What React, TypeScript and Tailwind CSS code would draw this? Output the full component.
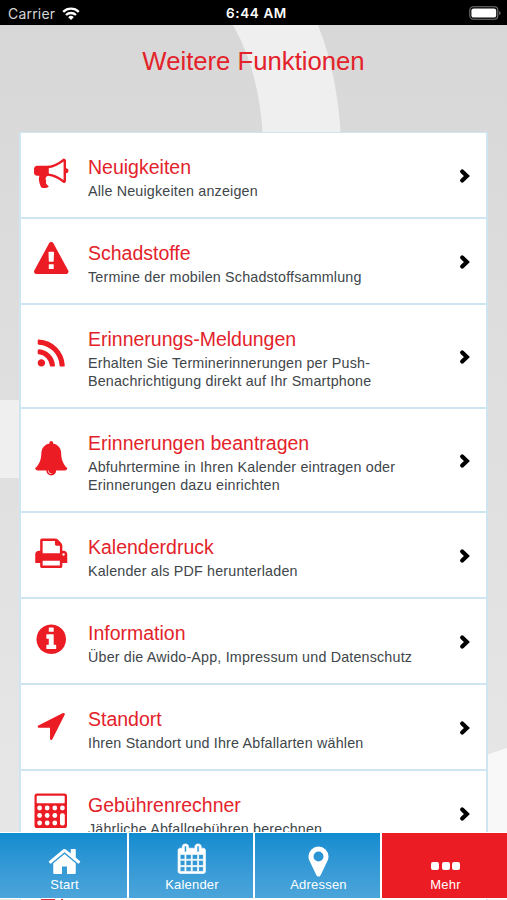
import type { ReactNode } from 'react';
import clsx from 'clsx';

const PATHS = {
  bullhorn:
    'M1664 640q53 0 90.5 37.5t37.5 90.5-37.5 90.5-90.5 37.5v384q0 52-38 90t-90 38q-417-347-812-380-58 19-91 66t-31 100.5 40 92.5q-20 33-23 65.5t6 58 33.5 55 48 50 61.5 50.5q-29 58-111.5 83t-168.5 11.5-132-55.5q-7-23-29.5-87.5t-32-94.5-23-89-15-101 3.5-98 22-110.5h-122q-66 0-113-47t-47-113v-192q0-66 47-113t113-47h480q435 0 896-384 52 0 90 38t38 90v384zm-128 604v-954q-394 302-768 343v270q377 42 768 341z',
  warning:
    'M1024 1375v-190q0-14-9.5-23.5t-22.5-9.5h-192q-13 0-22.5 9.5t-9.5 23.5v190q0 14 9.5 23.5t22.5 9.5h192q13 0 22.5-9.5t9.5-23.5zm-2-374l18-459q0-12-10-19-13-11-24-11h-220q-11 0-24 11-10 7-10 21l17 457q0 10 10 16.5t24 6.5h185q14 0 23.5-6.5t10.5-16.5zm-14-934l768 1408q35 63-2 126-17 29-46.5 46t-63.5 17h-1536q-34 0-63.5-17t-46.5-46q-37-63-2-126l768-1408q17-31 47-49t65-18 65 18 47 49z',
  rss: 'M576 1344q0 80-56 136t-136 56-136-56-56-136 56-136 136-56 136 56 56 136zm512 123q2 28-17 48-18 21-47 21h-135q-25 0-43-16.5t-20-41.5q-22-229-184.5-391.5t-391.5-184.5q-25-2-41.5-20t-16.5-43v-135q0-29 21-47 17-17 43-17h5q160 13 306 80.5t259 181.5q114 113 181.5 259t80.5 306zm512 2q2 27-18 47-18 20-46 20h-143q-26 0-44.5-17.5t-19.5-42.5q-12-215-101-408.5t-231.5-336-336-231.5-408.5-102q-25-1-42.5-19.5t-17.5-43.5v-143q0-28 20-46 18-18 44-18h3q262 13 501.5 120t425.5 294q187 186 294 425.5t120 501.5z',
  bell: 'M912 1696q0-16-16-16-59 0-101.5-42.5t-42.5-101.5q0-16-16-16t-16 16q0 73 51.5 124.5t124.5 51.5q16 0 16-16zm816-288q0 52-38 90t-90 38h-448q0 106-75 181t-181 75-181-75-75-181h-448q-52 0-90-38t-38-90q50-42 91-88t85-119.5 74.5-158.5 50-206 19.5-260q0-152 117-282.5t307-158.5q-8-19-8-39 0-40 28-68t68-28 68 28 28 68q0 20-8 39 190 28 307 158.5t117 282.5q0 139 19.5 260t50 206 74.5 158.5 85 119.5 91 88z',
  print:
    'M448 1536h896v-256h-896v256zm0-640h896v-384h-160q-40 0-68-28t-28-68v-160h-640v640zm1152 64q0-26-19-45t-45-19-45 19-19 45 19 45 45 19 45-19 19-45zm128 0v416q0 13-9.5 22.5t-22.5 9.5h-224v160q0 40-28 68t-68 28h-960q-40 0-68-28t-28-68v-160h-224q-13 0-22.5-9.5t-9.5-22.5v-416q0-79 56.5-135.5t135.5-56.5h64v-544q0-40 28-68t68-28h672q40 0 88 20t76 48l152 152q28 28 48 76t20 88v256h64q79 0 135.5 56.5t56.5 135.5z',
  info: 'M1152 1376v-160q0-14-9-23t-23-9h-96v-512q0-14-9-23t-23-9h-320q-14 0-23 9t-9 23v160q0 14 9 23t23 9h96v320h-96q-14 0-23 9t-9 23v160q0 14 9 23t23 9h448q14 0 23-9t9-23zm-128-896v-160q0-14-9-23t-23-9h-192q-14 0-23 9t-9 23v160q0 14 9 23t23 9h192q14 0 23-9t9-23zm640 416q0 209-103 385.5t-279.5 279.5-385.5 103-385.5-103-279.5-279.5-103-385.5 103-385.5 279.5-279.5 385.5-103 385.5 103 279.5 279.5 103 385.5z',
  arrow:
    'M1593 349l-640 1280q-17 35-57 35-5 0-15-2-22-5-35.5-22.5t-13.5-39.5v-576h-576q-22 0-39.5-13.5t-22.5-35.5 4-42 29-30l1280-640q13-7 29-7 27 0 45 19 15 14 18.5 34.5t-6.5 39.5z',
  home: 'M1472 992v480q0 26-19 45t-45 19h-384v-384h-256v384h-384q-26 0-45-19t-19-45v-480q0-1 .5-3t.5-3l575-474 575 474q1 2 1 6zm223-69l-62 74q-8 9-21 11h-3q-13 0-21-7l-692-577-692 577q-12 8-24 7-13-2-21-11l-62-74q-8-10-7-23.5t11-21.5l719-599q32-26 76-26t76 26l244 204v-195q0-14 9-23t23-9h192q14 0 23 9t9 23v408l219 182q10 8 11 21.5t-7 23.5z',
  calendar:
    'M192 1664h288v-288h-288v288zm352 0h320v-288h-320v288zm-352-352h288v-320h-288v320zm352 0h320v-320h-320v320zm-352-384h288v-288h-288v288zm736 736h320v-288h-320v288zm-384-736h320v-288h-320v288zm768 736h288v-288h-288v288zm-384-352h320v-320h-320v320zm-352-864v-288q0-13-9.5-22.5t-22.5-9.5h-64q-13 0-22.5 9.5t-9.5 22.5v288q0 13 9.5 22.5t22.5 9.5h64q13 0 22.5-9.5t9.5-22.5zm736 864h288v-320h-288v320zm-384-384h320v-288h-320v288zm384 0h288v-288h-288v288zm32-480v-288q0-13-9.5-22.5t-22.5-9.5h-64q-13 0-22.5 9.5t-9.5 22.5v288q0 13 9.5 22.5t22.5 9.5h64q13 0 22.5-9.5t9.5-22.5zm384-64v1280q0 52-38 90t-90 38h-1408q-52 0-90-38t-38-90v-1280q0-52 38-90t90-38h128v-96q0-66 47-113t113-47h64q66 0 113 47t47 113v96h384v-96q0-66 47-113t113-47h64q66 0 113 47t47 113v96h128q52 0 90 38t38 90z',
  marker:
    'M1152 640q0-106-75-181t-181-75-181 75-75 181 75 181 181 75 181-75 75-181zm256 0q0 109-33 179l-364 774q-16 33-47.5 52t-67.5 19-67.5-19-46.5-52l-365-774q-33-70-33-179 0-212 150-362t362-150 362 150 150 362z',
};

function Icon({ path, className }: { path: string; className?: string }) {
  return (
    <svg viewBox="0 0 1792 1792" fill="currentColor" className={clsx('shrink-0 overflow-visible', className)}>
      <path d={path} />
    </svg>
  );
}

function CalculatorIcon() {
  const columns = [5.6, 13.2, 20.8];
  const rows = [15, 22.5, 30];

  return (
    <svg viewBox="0 0 34 36" className="h-9 w-[34px] shrink-0">
      <rect x="0.5" y="0.5" width="32.5" height="34.5" rx="2.6" fill="currentColor" />
      <rect x="2.7" y="2.8" width="28" height="7.4" rx="0.8" fill="white" />
      {rows.map((y) => columns.map((x) => <circle key={`${x}-${y}`} cx={x} cy={y} r="2.4" fill="white" />))}
      <circle cx="28.4" cy="15" r="2.4" fill="white" />
      <rect x="26" y="20.2" width="4.8" height="12.2" rx="2" fill="white" />
    </svg>
  );
}

function Chevron() {
  return (
    <svg viewBox="0 0 12 16" className="mt-0.5 mr-[15px] h-4 w-3 shrink-0" fill="none">
      <path d="M3.2 3.4L7.9 8L3.2 12.6" stroke="black" strokeWidth="4.2" strokeLinecap="round" strokeLinejoin="miter" />
    </svg>
  );
}

interface MenuItem {
  title: string;
  lines: string[];
  icon: ReactNode;
}

const rowIcon = 'size-[34.5px]';

const items: MenuItem[] = [
  { title: 'Neuigkeiten', lines: ['Alle Neuigkeiten anzeigen'], icon: <Icon path={PATHS.bullhorn} className={rowIcon} /> },
  {
    title: 'Schadstoffe',
    lines: ['Termine der mobilen Schadstoffsammlung'],
    icon: <Icon path={PATHS.warning} className={rowIcon} />,
  },
  {
    title: 'Erinnerungs-Meldungen',
    lines: ['Erhalten Sie Terminerinnerungen per Push-', 'Benachrichtigung direkt auf Ihr Smartphone'],
    icon: <Icon path={PATHS.rss} className={rowIcon} />,
  },
  {
    title: 'Erinnerungen beantragen',
    lines: ['Abfuhrtermine in Ihren Kalender eintragen oder', 'Erinnerungen dazu einrichten'],
    icon: <Icon path={PATHS.bell} className={rowIcon} />,
  },
  { title: 'Kalenderdruck', lines: ['Kalender als PDF herunterladen'], icon: <Icon path={PATHS.print} className={rowIcon} /> },
  {
    title: 'Information',
    lines: ['Über die Awido-App, Impressum und Datenschutz'],
    icon: <Icon path={PATHS.info} className={rowIcon} />,
  },
  {
    title: 'Standort',
    lines: ['Ihren Standort und Ihre Abfallarten wählen'],
    icon: <Icon path={PATHS.arrow} className={rowIcon} />,
  },
  { title: 'Gebührenrechner', lines: ['Jährliche Abfallgebühren berechnen'], icon: <CalculatorIcon /> },
];

function MenuRow({ title, lines, icon }: MenuItem) {
  return (
    <li className={clsx('flex items-center border-b-2 border-[#cfe5f2]', lines.length > 1 ? 'h-[104px]' : 'h-[86px]')}>
      <div className="mb-1 flex w-[60px] shrink-0 justify-center text-[#ec1c24]">{icon}</div>
      <div className="grow pt-1 pl-[7px]">
        <h2 className="mb-px text-[19.5px] leading-[25px] whitespace-nowrap text-[#e3222a]">{title}</h2>
        {lines.map((line) => (
          <p
            key={line}
            className="relative top-px text-[14.3px] leading-[18px] tracking-[0.18px] whitespace-nowrap text-[#40464a]"
          >
            {line}
          </p>
        ))}
      </div>
      <Chevron />
    </li>
  );
}

function Tab({ label, icon, active }: { label: string; icon: ReactNode; active?: boolean }) {
  return (
    <div
      className={clsx(
        'flex h-full flex-col items-center justify-end border-white pb-1 pl-0.5 text-white not-last:border-r-2',
        active ? 'bg-[#ec1c24]' : 'bg-linear-to-b from-[#0f8cd0] to-[#4ba5da]',
      )}
    >
      {icon}
      <span className="text-[13px] leading-[18px] tracking-[0.2px]">{label}</span>
    </div>
  );
}

function StatusBar() {
  return (
    <header className="relative grid h-[25px] grid-cols-3 items-center bg-black px-2 pt-0.5 font-['Inter'] text-[13.5px] leading-none text-white">
      <div className="flex items-center gap-[7px] text-[#d5d5d5]">
        <span className="text-[14px] tracking-[0.2px]">Carrier</span>
        <svg viewBox="0 0 18 13" className="h-[13px] w-[18px]" fill="none" stroke="white" strokeWidth="2.3">
          <path d="M1.2 4.8a11.2 11.2 0 0 1 15.6 0" />
          <path d="M4 8a7.2 7.2 0 0 1 10 0" />
          <path d="M9 13L6.2 10.2a4 4 0 0 1 5.6 0z" fill="white" stroke="none" />
        </svg>
      </div>
      <span className="pl-1.5 text-center font-semibold tracking-[0.6px] whitespace-nowrap">6:44 AM</span>
      <svg viewBox="0 0 32 14" className="-mr-0.5 mb-0.5 h-3.5 w-8 justify-self-end">
        <rect x="0.8" y="0.8" width="28" height="12.4" rx="3.5" fill="none" stroke="#777" strokeWidth="1.1" />
        <rect x="2.4" y="2.4" width="24.8" height="9.2" rx="2.2" fill="white" />
        <path d="M30.2 5v4q1.4-.5 1.4-2t-1.4-2z" fill="#777" />
      </svg>
    </header>
  );
}

function Backdrop() {
  return (
    <svg viewBox="0 0 507 900" className="absolute inset-0 h-full w-full">
      <defs>
        <linearGradient id="backdrop" x1="0" y1="0" x2="0" y2="1">
          <stop offset="0" stopColor="#d7d7d7" />
          <stop offset="1" stopColor="#e8e8e8" />
        </linearGradient>
      </defs>
      <rect width="507" height="900" fill="url(#backdrop)" />
      <path d="M233 25Q260 72 263 140H341Q338 75 318 25Z" fill="#efefef" />
      <rect y="400" width="30" height="78" fill="#efefef" />
      <path d="M480 757L507 748V900H480Z" fill="#f8f8f8" />
    </svg>
  );
}

export default function App() {
  return (
    <div className="relative h-[900px] w-[507px] overflow-hidden font-['Liberation_Sans',sans-serif]">
      <Backdrop />
      <div className="relative">
        <StatusBar />
        <h1 className="flex h-[107px] justify-center pt-5 text-[25.7px] leading-[32px] text-[#e3222a]">
          Weitere Funktionen
        </h1>
        <ul className="mx-[19px] border-2 border-t border-[#cfe5f2] bg-white">
          {items.map((item) => (
            <MenuRow key={item.title} {...item} />
          ))}
          {/* Next entry, only the edge of its icon shows below the tab bar */}
          <li className="flex h-[86px] items-center pl-5 text-[#d8303c]">
            <svg viewBox="0 0 22 30" className="mb-0.5 h-[30px] w-[22px]" fill="currentColor">
              <rect width="14" height="30" />
              <rect x="20" width="2" height="30" />
            </svg>
          </li>
        </ul>
      </div>

      <nav className="absolute inset-x-0 bottom-[2px] grid h-[65px] grid-cols-[129px_126px_127px_125px] outline outline-white">
        <Tab label="Start" icon={<Icon path={PATHS.home} className="-mb-[3px] size-[35px]" />} />
        <Tab
          label="Kalender"
          icon={<Icon path={PATHS.calendar} className="mb-[3px] size-[29.5px] stroke-white stroke-[40px]" />}
        />
        <Tab label="Adressen" icon={<Icon path={PATHS.marker} className="-mb-[3px] size-[35px]" />} />
        <Tab
          label="Mehr"
          active
          icon={
            <span className="mb-1.5 flex gap-[2.5px]">
              <i className="size-2 rounded-[2px] bg-white" />
              <i className="size-2 rounded-[2px] bg-white" />
              <i className="size-2 rounded-[2px] bg-white" />
            </span>
          }
        />
      </nav>
    </div>
  );
}
